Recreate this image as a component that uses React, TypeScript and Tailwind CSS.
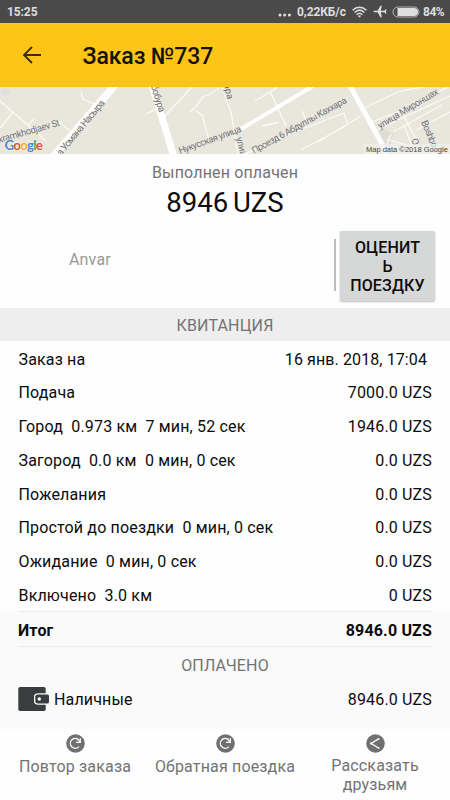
import React from "react";

const rows: [string, string][] = [
  ["Заказ на", "16 янв. 2018, 17:04"],
  ["Подача", "7000.0 UZS"],
  ["Город  0.973 км  7 мин, 52 сек", "1946.0 UZS"],
  ["Загород  0.0 км  0 мин, 0 сек", "0.0 UZS"],
  ["Пожелания", "0.0 UZS"],
  ["Простой до поездки  0 мин, 0 сек", "0.0 UZS"],
  ["Ожидание  0 мин, 0 сек", "0.0 UZS"],
  ["Включено  3.0 км", "0 UZS"],
];

function StatusBar() {
  return (
    <div className="flex h-[23px] shrink-0 items-center bg-[#4a4a4a] pr-[6px] pl-[7px] text-[12px] font-bold tracking-[-0.1px] text-[#dedede]">
      <span>15:25</span>
      <div className="ml-auto flex items-center">
        <svg className="mt-[6px] mr-[6px]" width="13" height="4" viewBox="0 0 13 4" fill="#dedede">
          <circle cx="2" cy="2" r="1.5" />
          <circle cx="6.7" cy="2" r="1.5" />
          <circle cx="11.4" cy="2" r="1.5" />
        </svg>
        <span className="w-[48px] whitespace-nowrap">0,22КБ/с</span>
        <svg className="ml-[7px]" width="15" height="12" viewBox="0 0 15 12" fill="none" stroke="#dedede" strokeWidth="1.5">
          <path d="M.6 4.2C4.6.2 10.4.2 14.4 4.2" />
          <path d="M2.6 6.5C5.6 3.6 9.4 3.6 12.4 6.5" />
          <path d="M4.6 8.7C6.4 7 8.6 7 10.4 8.7" />
          <path d="M7.5 11.6 5.9 9.9c1-.8 2.2-.8 3.2 0z" fill="#dedede" stroke="none" />
        </svg>
        <svg className="ml-[6px]" width="14" height="13" viewBox="0 0 14 13" fill="#dedede">
          <path d="M0 6.5 1.3 5.7H4.6L7.4.8H8.8L7.8 5.7H11.4L12.5 4.3H13.4L13 6.5 13.4 8.7H12.5L11.4 7.3H7.8L8.8 12.2H7.4L4.6 7.3H1.3Z" />
        </svg>
        <svg className="mr-[3px] ml-[5px]" width="28" height="12" viewBox="0 0 28 12">
          <rect x="1" y="1" width="26" height="10" rx="5" fill="none" stroke="#b5b5b5" />
          <path d="M5.5 2H22a4 4 0 0 1 0 8H5.5Z" fill="#dedede" />
        </svg>
        <span className="w-[21px] whitespace-nowrap tracking-[-0.5px]">84%</span>
      </div>
    </div>
  );
}

function MapStrip() {
  return (
    <svg className="block h-[67px] w-[450px] shrink-0" viewBox="0 87 450 67">
      <rect x="0" y="87" width="450" height="67" fill="#e9e7dc" />
      <ellipse cx="5" cy="92" rx="5" ry="4" fill="#dfe0e0" />
      <path d="M379 127 394 134 389 147 379 143Z" fill="#dddcd5" />
      <g fill="none" stroke="#fbfaf7" strokeWidth="1.3">
        <path d="M0 101 46 141M0 128 13 112M28 125 34 119M57 120 70 131M81 92 83 99 94 104" />
        <path d="M146 114 157 109M164 117 192 87M219 88 210 94 203 97 197 105 190 112M195 110 202 115 209 140" />
        <path d="M222 87 231 112 238 154M255 101 278 87M270 91 286 126M302 111 306 120" />
        <path d="M245 154 292 133 344 113 347 123M262 126 279 122M318 142 361 116M301 150 344 127" />
        <path d="M362 109 400 91 450 82M367 124 405 109 450 86M377 130 411 114 450 96" />
        <path d="M401 111 416 139M416 130 450 112M393 132 442 105M404 125 412 146M387 139 435 154M391 134 383 154" />
      </g>
      <g fill="none" stroke="#fff">
        <path d="M52 158 115 85" strokeWidth="7.5" />
        <path d="M152 85 174 157" strokeWidth="7" />
        <path d="M241 129 313 86" strokeWidth="4" />
        <path d="M350 86 387 153" strokeWidth="5" />
      </g>
      <g className="font-[Roboto,sans-serif] text-[9.5px]" fill="#707075" stroke="#efede6" strokeWidth="0.8" paintOrder="stroke">
        <text transform="translate(-1 143) rotate(-16)" textLength="64">kramkhodjaev St</text>
        <text transform="translate(61 156) rotate(-50)" textLength="69">а Усмана Насыра</text>
        <text transform="translate(151 86) rotate(73)" textLength="28">бобура</text>
        <text transform="translate(180 154) rotate(-20)" textLength="66">Нукусская улица</text>
        <text transform="translate(236 138) rotate(75)" textLength="20">улиц</text>
        <text transform="translate(224 84) rotate(78)" textLength="16">ара</text>
        <text transform="translate(254 154) rotate(-29)" textLength="107">Проезд 6 Абдуллы Каххара</text>
        <text transform="translate(380 129) rotate(-31)" textLength="69">улица Мироншах</text>
        <text transform="translate(421 122) rotate(67)" textLength="29">Boshbo</text>
        <text transform="translate(411 140) rotate(67)">O</text>
      </g>
      <text x="4.5" y="150" textLength="38.5" className="font-[Lato,sans-serif] text-[13.5px] font-bold" stroke="#f6f4ef" strokeWidth="1" paintOrder="stroke">
        <tspan fill="#4a86d8">G</tspan><tspan fill="#dc5046">o</tspan><tspan fill="#e9b320">o</tspan><tspan fill="#4a86d8">g</tspan><tspan fill="#46a35e">l</tspan><tspan fill="#dc5046">e</tspan>
      </text>
      <rect x="363" y="144" width="87" height="10" fill="#f1efe9" fillOpacity=".7" />
      <text x="366" y="151.5" textLength="82" className="font-['Liberation_Sans',sans-serif] text-[7.5px]" fill="#444">Map data ©2018 Google</text>
    </svg>
  );
}

function WalletIcon() {
  return (
    <svg className="shrink-0" width="32" height="26" viewBox="0 0 32 26">
      <rect x="0.3" y="1" width="27.4" height="24" rx="1.8" fill="#393d3d" />
      <path d="M28 7.3H20.5Q16 7.3 16 10.5V15.5Q16 18.7 20.5 18.7H28" fill="#fafafa" />
      <path d="M20 8.5H29.5Q31 8.5 31 10V16Q31 17.5 29.5 17.5H20Q17.3 17.5 17.3 15.5V10.5Q17.3 8.5 20 8.5Z" fill="#393d3d" />
      <circle cx="21.3" cy="13" r="1.7" fill="#fafafa" />
    </svg>
  );
}

function RepeatIcon() {
  return (
    <svg width="19" height="19" viewBox="0 0 19 19">
      <circle cx="9.5" cy="9.5" r="9.3" fill="#707070" />
      <path d="M12.9 12.6A4.9 4.9 0 1 1 12.4 5.6" fill="none" stroke="#fafafa" strokeWidth="1.4" />
      <path d="M14.3 4V8.3H10" fill="none" stroke="#fafafa" strokeWidth="1.3" />
      <path d="M12 5.5 14.2 8.2" stroke="#fafafa" strokeWidth="1.2" />
    </svg>
  );
}

function ShareIcon() {
  return (
    <svg width="19" height="19" viewBox="0 0 19 19">
      <circle cx="9.5" cy="9.5" r="9.3" fill="#707070" />
      <path d="M12.6 4.9 5 9.4 12.6 14" fill="none" stroke="#fafafa" strokeWidth="1.3" />
      <circle cx="12.6" cy="4.9" r="0.9" fill="#fafafa" />
      <circle cx="5" cy="9.4" r="1.1" fill="#fafafa" />
      <circle cx="12.6" cy="14" r="0.9" fill="#fafafa" />
    </svg>
  );
}

export default function App() {
  return (
    <div className="flex h-[800px] w-[450px] flex-col overflow-hidden bg-[#fefefe] font-[Roboto,sans-serif] text-[16px] tracking-[0.16px] text-[#0c0c0c]">
      <StatusBar />
      <header className="flex h-16 shrink-0 items-center bg-[#ffc516] pl-[22px]">
        <svg width="20" height="18" viewBox="0 0 20 18" fill="none" stroke="#3b2e12" strokeWidth="1.8">
          <path d="M19 9H2M10 1 2 9 10 17" />
        </svg>
        <h1 className="mt-[4px] ml-[40.5px] text-[23px] font-medium tracking-[-0.08px] text-[#15110a]">Заказ №737</h1>
      </header>
      <MapStrip />

      <section className="flex h-[154px] shrink-0 flex-col">
        <div className="mt-[9px] text-center text-[16px] leading-5">
          <span className="text-[#737373]">Выполнен оплачен</span>
        </div>
        <div className="mt-[3px] text-center text-[27.5px] leading-[34px] tracking-normal [word-spacing:-2px]">8946 UZS</div>
        <div className="mt-[10px] flex h-[72px]">
          <div className="w-[334px] pt-[18px] pl-[69px] leading-6 text-[#999]">Anvar</div>
          <div className="mt-[9px] h-[52px] w-[1.5px] bg-[#bdbdbd]" />
          <button className="mt-px ml-[4.5px] flex h-[70px] w-[95px] flex-col items-center justify-center rounded-[2px] bg-[#d6d7d7] pt-px text-[16px] leading-[19px] font-medium tracking-[0.16px] shadow-[0_1px_2px_rgba(0,0,0,0.25)]">
            <span>ОЦЕНИТ</span>
            <span>Ь</span>
            <span>ПОЕЗДКУ</span>
          </button>
        </div>
      </section>

      <div className="flex h-[33px] shrink-0 items-center justify-center bg-[#eeeeee] pt-[3px] text-[#737373]">КВИТАНЦИЯ</div>

      <section className="h-[270px] shrink-0 pt-[1.7px]">
        {rows.map(([label, value], i) => (
          <div key={label} className={`flex h-[33.75px] items-center justify-between pl-[18.5px] whitespace-pre ${i === 0 ? "pr-[23px]" : "pr-[18px]"}`}>
            <span>{label}</span>
            <span className={i === 0 ? "tracking-[0.1px]" : ""}>{value}</span>
          </div>
        ))}
      </section>

      <section className="flex h-[118px] shrink-0 flex-col bg-[#fafafa] px-[18px]">
        <div className="flex h-[36px] items-center justify-between border-y border-[#ececec] pt-[4px] font-bold">
          <span>Итог</span>
          <span>8946.0 UZS</span>
        </div>
        <div className="mt-[7px] text-center leading-6 text-[#737373]">ОПЛАЧЕНО</div>
        <div className="mt-[8px] flex h-[26px] items-center">
          <WalletIcon />
          <span className="mt-[2px] ml-[4px]">Наличные</span>
          <span className="mt-[2px] ml-auto">8946.0 UZS</span>
        </div>
      </section>

      <nav className="grid grow grid-cols-3 text-center text-[16px] leading-[19px] text-[#737373]">
        <div className="flex flex-col items-center pt-[5px]">
          <RepeatIcon />
          <span className="mt-[4px]">Повтор заказа</span>
        </div>
        <div className="flex flex-col items-center pt-[5px]">
          <RepeatIcon />
          <span className="mt-[4px] whitespace-nowrap">Обратная поездка</span>
        </div>
        <div className="flex flex-col items-center pt-[5px]">
          <ShareIcon />
          <span className="mt-[3px]">Рассказать<br />друзьям</span>
        </div>
      </nav>
    </div>
  );
}
